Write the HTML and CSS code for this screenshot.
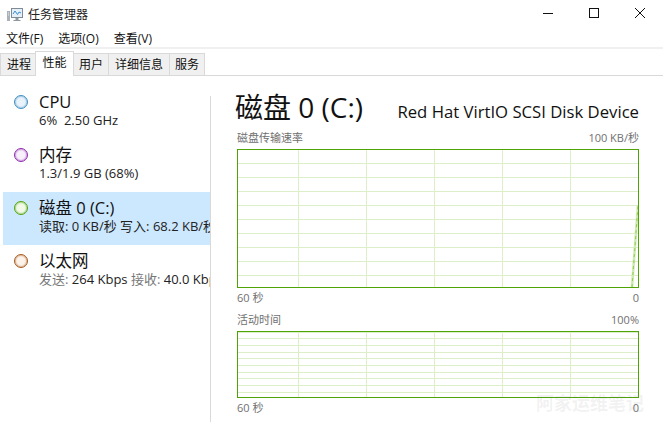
FILE: index.html
```html
<!DOCTYPE html>
<html lang="zh-CN">
<head>
<meta charset="utf-8">
<title>任务管理器</title>
<link rel="stylesheet" href="styles.css">
</head>
<body>
<div class="window">
  <header class="titlebar">
    <svg class="app-icon" width="16" height="16" viewBox="0 0 16 16">
      <path d="M0 5h3v10H0z" fill="#a9b2b9"/>
      <path d="M1 7h1M1 9h1" stroke="#e8ecef"/>
      <rect x="4.5" y="2.5" width="11" height="9" fill="#e4f1fa" stroke="#7f8c96"/>
      <path d="M6 8l2-3 2.5 3.5L12 6l2 1" fill="none" stroke="#3d8fcf"/>
      <path d="M8.500 12h3v2h2v1h-7v-1h2z" fill="#8c98a2"/>
    </svg>
    <span class="app-title">任务管理器</span>
    <div class="win-controls">
      <svg class="win-btn" width="46" height="28" viewBox="0 0 46 28"><path d="M18 13.5h10" stroke="#111" fill="none"/></svg>
      <svg class="win-btn" width="46" height="28" viewBox="0 0 46 28"><rect x="18.5" y="8.5" width="9" height="9" stroke="#111" fill="none"/></svg>
      <svg class="win-btn" width="46" height="28" viewBox="0 0 46 28"><path d="M18 8l10 10M28 8L18 18" stroke="#111" fill="none"/></svg>
    </div>
  </header>
  <nav class="menubar">
    <span>文件(F)</span><span>选项(O)</span><span>查看(V)</span>
  </nav>
  <div class="tabs">
    <span class="tab tab-first">进程</span>
    <span class="tab active">性能</span>
    <span class="tab">用户</span>
    <span class="tab tab-wide">详细信息</span>
    <span class="tab">服务</span>
  </div>
  <main class="content">
    <aside class="sidebar">
      <div class="item">
        <i class="dot cpu"></i>
        <div class="item-text"><div class="item-name">CPU</div><div class="item-sub">6%&nbsp; 2.50 GHz</div></div>
      </div>
      <div class="item">
        <i class="dot mem"></i>
        <div class="item-text"><div class="item-name">内存</div><div class="item-sub">1.3/1.9 GB (68%)</div></div>
      </div>
      <div class="item selected">
        <i class="dot disk"></i>
        <div class="item-text"><div class="item-name">磁盘 0 (C:)</div><div class="item-sub">读取: 0 KB/秒 写入: 68.2 KB/秒</div></div>
      </div>
      <div class="item">
        <i class="dot net"></i>
        <div class="item-text"><div class="item-name">以太网</div><div class="item-sub"><span class="muted">发送:</span> 264 Kbps <span class="muted">接收:</span> 40.0 Kbps</div></div>
      </div>
    </aside>
    <section class="detail">
      <div class="detail-head">
        <h1>磁盘 0 (C:)</h1>
        <div class="device">Red Hat VirtIO SCSI Disk Device</div>
      </div>
      <div class="label-row rate-label"><span>磁盘传输速率</span><span>100 KB/秒</span></div>
      <div class="graph graph-rate">
        <svg class="trace" viewBox="0 0 400 137" preserveAspectRatio="none">
          <path d="M394 137L400 55" fill="none" stroke="#cfeab0" stroke-width="2.5"/>
          <path d="M394 137L400 55" fill="none" stroke="#8fd04a" stroke-width="1" stroke-dasharray="3 3"/>
        </svg>
      </div>
      <div class="label-row axis"><span>60 秒</span><span>0</span></div>
      <div class="label-row active-label"><span>活动时间</span><span>100%</span></div>
      <div class="graph graph-active"></div>
      <div class="label-row axis"><span>60 秒</span><span>0</span></div>
    </section>
  </main>
  <div class="watermark">阿家运维笔记</div>
</div>
</body>
</html>
```
FILE: styles.css
```css
* { box-sizing: border-box; }
html, body { margin: 0; height: 100%; }
body {
  background: #fff;
  color: #000;
  font-family: "Open Sans", "Noto Sans CJK SC", sans-serif;
  overflow: hidden;
}
.window { position: relative; width: 663px; height: 428px; overflow: hidden; }
.titlebar { display: flex; align-items: center; height: 28px; padding-left: 7px; }
.app-icon { flex: none; }
.app-title { margin-left: 5px; font-size: 12px; color: #222; }
.win-controls { display: flex; margin-left: auto; }
.win-btn { display: block; }
.menubar {
  display: flex; gap: 15px; height: 21px; padding: 2px 0 0 6px;
  font-size: 12px; line-height: 18px; color: #111;
  border-bottom: 2px solid #f0f0f0;
}
.tabs {
  display: flex; align-items: flex-end; height: 27px;
  border-bottom: 1px solid #d9d9d9; font-size: 12px;
}
.tab {
  height: 22px; padding: 0 5px; line-height: 22px;
  background: #f0f0f0; border: 1px solid #d9d9d9; border-bottom: 0; margin-left: -1px; color: #111;
}
.tab-first { margin-left: 0; padding: 0 4px 0 6px; }
.tab-wide { padding: 0 6px; }
.tab.active { height: 25px; padding: 0 6.5px; background: #fff; line-height: 22px; position: relative; top: 1px; z-index: 1; }
.content { display: flex; height: 352px; padding-left: 3px; }
.sidebar {
  position: relative; width: 208px; margin-top: 10px; height: 336px; overflow: hidden; flex: none;
}
.sidebar::after {
  content: ""; position: absolute; right: 0; top: 10px; bottom: 0; width: 1px; background: #d9d9d9;
}
.item { display: flex; height: 53px; width: 207px; padding: 6px 0 0 11px; white-space: nowrap; overflow: hidden; }
.dot {
  flex: none; width: 14px; height: 14px; margin-top: 3px; border-radius: 50%; border: 1px solid;
  box-shadow: inset 0 0 2px currentColor;
}
.dot.cpu { color: #3f8fc4; background: #eaf3fa; }
.dot.mem { color: #8f2bb0; background: #f8f0fb; }
.dot.disk { color: #4ea307; background: #f1f9e8; }
.dot.net { color: #a7591c; background: #fcf3ea; }
.item-text { margin-left: 11px; }
.item-name { font-size: 16.5px; line-height: 20px; color: #111; }
.item-sub { font-size: 13px; line-height: 16px; color: #222; }
.muted { color: #777; }
.selected { background: #cce8ff; }
.detail { flex: 1; padding: 14px 24px 0 24px; min-width: 0; }
.detail-head { display: flex; align-items: flex-end; justify-content: space-between; height: 34px; }
h1 { margin: 0; font-size: 28px; font-weight: 400; line-height: 34px; color: #111; white-space: nowrap; }
.device { font-size: 16.7px; line-height: 24px; color: #111; white-space: nowrap; }
.label-row { display: flex; justify-content: space-between; width: 404px; padding-left: 2px; font-size: 11px; line-height: 14px; height: 14px; color: #707070; }
.rate-label { margin-top: 7px; margin-bottom: 4px; }
.active-label { margin-top: 8px; margin-bottom: 4px; }
.axis { margin-top: 3px; }
.graph {
  position: relative; border: 1px solid #4ea307; background-color: #fff;
  width: 402px; margin-left: 2px;
}
.graph-rate {
  height: 139px;
  background-image:
    repeating-linear-gradient(to bottom, transparent 0 13px, #dcefc8 13px 14px),
    repeating-linear-gradient(to right, transparent 0 60px, #dcefc8 60px 61px, transparent 61px 68px);
}
.graph-active {
  height: 67px;
  background-image:
    repeating-linear-gradient(to bottom, #dcefc8 -0.35px, #dcefc8 0.65px, transparent 0.65px, transparent 6.3px),
    repeating-linear-gradient(to right, transparent 0 60px, #dcefc8 60px 61px, transparent 61px 68px);
}
.trace { position: absolute; inset: 0; width: 100%; height: 100%; }
.watermark {
  position: absolute; left: 536px; top: 391px;
  font-size: 18px; font-weight: 700; line-height: 24px; white-space: nowrap;
  color: rgba(120,120,120,0.1);
}
```
